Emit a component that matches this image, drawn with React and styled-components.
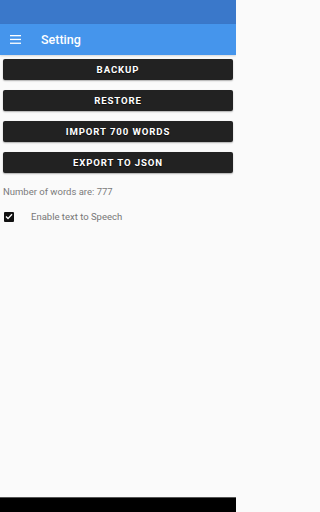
import React from "react";
import styled, { createGlobalStyle } from "styled-components";

const Global = createGlobalStyle`
  html, body { margin: 0; padding: 0; background: #fafafa; }
  body { font-family: Roboto, "Liberation Sans", sans-serif; }
  #root { height: 512px; }
`;

const Screen = styled.div`
  width: 236px;
  height: 512px;
  display: flex;
  flex-direction: column;
  background: #fafafa;
  overflow: hidden;
`;

const StatusBar = styled.div`
  height: 24px;
  background: #3a78ca;
  flex-shrink: 0;
`;

const AppBar = styled.div`
  height: 31px;
  background: #4595ec;
  display: flex;
  align-items: center;
  padding-left: 10px;
  gap: 20px;
  flex-shrink: 0;
  box-shadow: 0 1px 2px rgba(0,0,0,0.15);
`;

const Title = styled.div`
  color: #fff;
  font-size: 12.5px;
  font-weight: 500;
`;

const Content = styled.div`
  flex: 1;
  display: flex;
  flex-direction: column;
  padding: 4px 3px 0 3px;
`;

const Button = styled.button`
  height: 21px;
  margin-bottom: 10px;
  border: none;
  border-radius: 2px;
  background: #222222;
  color: #fff;
  font-family: Roboto, "Liberation Sans", sans-serif;
  font-weight: 700;
  font-size: 9.6px;
  letter-spacing: 0.9px;
  text-shadow: 0 1px 1px rgba(0,0,0,0.6);
  box-shadow: 0 1px 1.5px rgba(0,0,0,0.3);
  padding: 0;
  display: flex;
  align-items: center;
  justify-content: center;
`;

const Info = styled.div`
  margin-top: 2px;
  font-size: 9.5px;
  color: #7a7a7a;
  height: 14px;
  line-height: 14px;
`;

const CheckRow = styled.div`
  display: flex;
  align-items: center;
  margin-top: 12px;
  padding-left: 1px;
`;

const Box = styled.div`
  width: 10px;
  height: 10px;
  border-radius: 1px;
  background: #111;
  display: flex;
  align-items: center;
  justify-content: center;
`;

const CheckLabel = styled.div`
  margin-left: 17px;
  font-size: 9.5px;
  color: #777;
`;

const NavBar = styled.div`
  height: 14px;
  background: #000;
  border-top: 1px solid #555;
  flex-shrink: 0;
`;

export default function App() {
  return (
    <>
      <Global />
      <Screen>
        <StatusBar />
        <AppBar>
          <svg width="11" height="9" viewBox="0 0 11 9">
            <rect x="0" y="0" width="11" height="1.3" fill="#fff" />
            <rect x="0" y="3.8" width="11" height="1.3" fill="#fff" />
            <rect x="0" y="7.6" width="11" height="1.3" fill="#fff" />
          </svg>
          <Title>Setting</Title>
        </AppBar>
        <Content>
          <Button>BACKUP</Button>
          <Button>RESTORE</Button>
          <Button>IMPORT 700 WORDS</Button>
          <Button>EXPORT TO JSON</Button>
          <Info>Number of words are: 777</Info>
          <CheckRow>
            <Box>
              <svg width="8" height="7" viewBox="0 0 8 7">
                <path d="M1 3.6 L3 5.6 L7 1.2" stroke="#fff" strokeWidth="1.4" fill="none" />
              </svg>
            </Box>
            <CheckLabel>Enable text to Speech</CheckLabel>
          </CheckRow>
        </Content>
        <NavBar />
      </Screen>
    </>
  );
}
